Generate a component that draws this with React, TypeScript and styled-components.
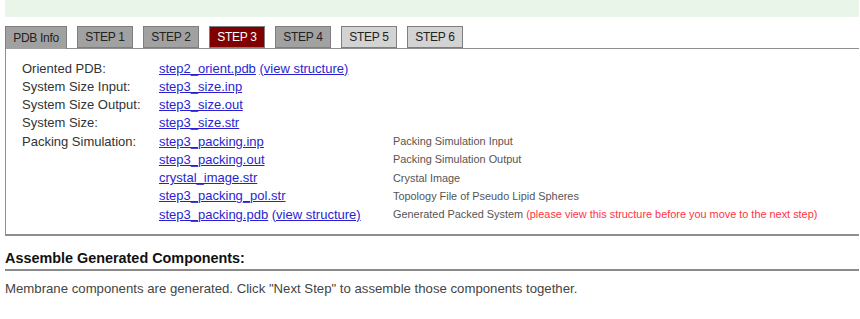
import React from 'react'
import styled, { createGlobalStyle } from 'styled-components'

const GlobalStyle = createGlobalStyle`
  body {
    margin: 0;
    background: #fff;
    font-family: "Liberation Sans", Arial, sans-serif;
    color: #333;
  }
`

// -------------Data for the step page----------
type FileRow = {
  label?: string
  file: string
  view?: boolean
  desc?: string
  note?: string
}

const tabs = [
  { name: 'PDB Info', kind: 'open' },
  { name: 'STEP 1', kind: 'done' },
  { name: 'STEP 2', kind: 'done' },
  { name: 'STEP 3', kind: 'current' },
  { name: 'STEP 4', kind: 'done' },
  { name: 'STEP 5', kind: 'todo' },
  { name: 'STEP 6', kind: 'todo' },
]

const rows: FileRow[] = [
  { label: 'Oriented PDB:', file: 'step2_orient.pdb', view: true },
  { label: 'System Size Input:', file: 'step3_size.inp' },
  { label: 'System Size Output:', file: 'step3_size.out' },
  { label: 'System Size:', file: 'step3_size.str' },
  { label: 'Packing Simulation:', file: 'step3_packing.inp', desc: 'Packing Simulation Input' },
  { file: 'step3_packing.out', desc: 'Packing Simulation Output' },
  { file: 'crystal_image.str', desc: 'Crystal Image' },
  { file: 'step3_packing_pol.str', desc: 'Topology File of Pseudo Lipid Spheres' },
  {
    file: 'step3_packing.pdb',
    view: true,
    desc: 'Generated Packed System',
    note: '(please view this structure before you move to the next step)',
  },
]

const Page = styled.div`
  margin-left: 5px;
  width: 854px;
`

const Banner = styled.div`
  height: 17px;
  background: #eaf5e9;
`

const TabBar = styled.div`
  display: flex;
  gap: 10px;
  margin-top: 9px;
  height: 22px;
`

const Tab = styled.div<{ kind: string }>`
  display: flex;
  align-items: center;
  justify-content: center;
  box-sizing: border-box;
  width: ${p => (p.kind === 'open' ? '62px' : '56px')};
  height: ${p => (p.kind === 'open' ? '23px' : '22px')};
  font-size: 12px;
  letter-spacing: -0.3px;
  border: 1px solid #7f7f7f;
  border-bottom: ${p => (p.kind === 'open' ? 'none' : '1px solid #7f7f7f')};
  background: ${p =>
    p.kind === 'current' ? '#800000' : p.kind === 'todo' ? '#d3d3d3' : '#a1a1a1'};
  color: ${p => (p.kind === 'current' ? '#fff' : '#222')};
  position: relative;
  z-index: 1;
`

const Panel = styled.div`
  border: 1px solid #8f8f8f;
  border-width: 1px 0 2px 1px;
  padding: 10px 0 11px 16px;
  display: grid;
  grid-template-columns: 137px 234px 1fr;
  grid-auto-rows: 18.25px;
  align-items: center;
  font-size: 13px;
`

const Label = styled.div`
  color: #333;
`

const FileLink = styled.a`
  color: #2a1fd0;
  text-decoration: underline;
  cursor: pointer;
`

const Desc = styled.div`
  font-size: 10.9px;
  color: #555;
`

const Note = styled.span`
  color: #ff3344;
`

const Heading = styled.h3`
  margin: 14px 0 0;
  padding-bottom: 2px;
  font-size: 14.4px;
  line-height: 17px;
  font-weight: bold;
  color: #111;
  border-bottom: 2px solid #8a8a8a;
`

const Info = styled.p`
  margin: 10px 0 0;
  font-size: 13.2px;
  line-height: 15px;
  color: #444;
`

const App = () => {
  return (
    <Page>
      <GlobalStyle />
      <Banner />
      <TabBar>
        {tabs.map(t => (
          <Tab key={t.name} kind={t.kind}>
            {t.name}
          </Tab>
        ))}
      </TabBar>
      <Panel>
        {rows.map(r => (
          <React.Fragment key={r.file}>
            <Label>{r.label || ''}</Label>
            <div>
              <FileLink>{r.file}</FileLink>
              {r.view && (
                <>
                  {' '}
                  <FileLink>(view structure)</FileLink>
                </>
              )}
            </div>
            <Desc>
              {r.desc}
              {r.note && (
                <>
                  {' '}
                  <Note>{r.note}</Note>
                </>
              )}
            </Desc>
          </React.Fragment>
        ))}
      </Panel>
      <Heading>Assemble Generated Components:</Heading>
      <Info>
        Membrane components are generated. Click "Next Step" to assemble those components together.
      </Info>
    </Page>
  )
}

export default App
